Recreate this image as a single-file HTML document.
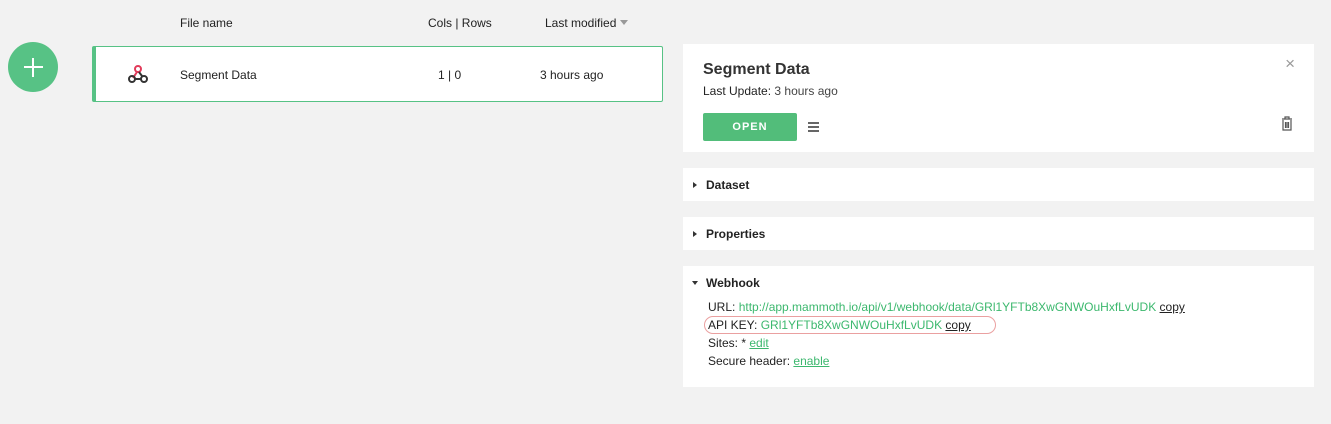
<!DOCTYPE html>
<html><head><style>
body{margin:0;width:1331px;height:424px;background:#f2f2f2;font-family:"Liberation Sans",sans-serif;color:#222;font-size:12px;position:relative;overflow:hidden}
.a{position:absolute;white-space:nowrap}
.box{position:absolute;left:683px;width:631px;background:#fff}
.g{color:#3cb86e}
.u{text-decoration:underline}
.tri{display:inline-block;width:0;height:0;border-left:4px solid #333;border-top:3.5px solid transparent;border-bottom:3.5px solid transparent;margin-right:9px;vertical-align:1px}
.trid{display:inline-block;width:0;height:0;border-top:4px solid #333;border-left:3.5px solid transparent;border-right:3.5px solid transparent;margin-right:8px;vertical-align:2px}
</style></head><body>
<div class="a" style="left:180px;top:16px">File name</div>
<div class="a" style="left:428px;top:16px">Cols | Rows</div>
<div class="a" style="left:545px;top:16px">Last modified <span style="display:inline-block;border-top:5px solid #999;border-left:4.5px solid transparent;border-right:4.5px solid transparent;vertical-align:2px"></span></div>
<div class="a" style="left:8px;top:42px;width:50px;height:50px;border-radius:50%;background:#57c285"></div>
<div class="a" style="left:24px;top:66px;width:19px;height:2px;background:#fff"></div>
<div class="a" style="left:32px;top:58px;width:2px;height:19px;background:#fff"></div>
<div class="a" style="left:92px;top:46px;width:566px;height:54px;background:#fff;border:1px solid #57c285;border-left:4px solid #57c285;border-radius:2px"></div>
<svg class="a" style="left:127px;top:64px" width="22" height="20" viewBox="0 0 22 20"><circle cx="11" cy="5" r="3" fill="none" stroke="#e23b5a" stroke-width="2"/><path d="M10 8 L6 14" stroke="#e23b5a" stroke-width="2"/><circle cx="5" cy="15" r="3" fill="none" stroke="#333" stroke-width="2"/><circle cx="17" cy="15" r="3" fill="none" stroke="#333" stroke-width="2"/><path d="M8 15 H14 M12 8 L15 12" stroke="#333" stroke-width="2"/></svg>
<div class="a" style="left:180px;top:68px">Segment Data</div>
<div class="a" style="left:438px;top:68px">1 | 0</div>
<div class="a" style="left:540px;top:68px">3 hours ago</div>

<div class="box" style="top:44px;height:108px">
<div class="a" style="left:20px;top:17px;font-size:16px;font-weight:bold;color:#333">Segment Data</div>
<div class="a" style="left:20px;top:40px">Last Update: <span style="color:#444">3 hours ago</span></div>
<div class="a" style="right:19px;top:10px;font-size:17px;color:#999">×</div>
<div class="a" style="left:20px;top:69px;width:94px;height:28px;background:#52bd7a;border-radius:2px;color:#fff;font-weight:bold;text-align:center;line-height:28px;letter-spacing:1px;font-size:11px">OPEN</div>
<div class="a" style="left:125px;top:78px;width:11px;height:2px;background:#666;box-shadow:0 4px 0 #666,0 8px 0 #666"></div>
<svg class="a" style="left:598px;top:72px" width="12" height="15" viewBox="0 0 12 15"><path d="M1 3H11M4 3V1H8V3M2 4V14H10V4M4.5 6V12M6 6V12M7.5 6V12" fill="none" stroke="#555" stroke-width="1.2"/></svg>
</div>
<div class="box" style="top:168px;height:33px"><div class="a" style="left:10px;top:10px;font-weight:bold"><span class="tri"></span>Dataset</div></div>
<div class="box" style="top:217px;height:33px"><div class="a" style="left:10px;top:10px;font-weight:bold"><span class="tri"></span>Properties</div></div>
<div class="box" style="top:266px;height:121px">
<div class="a" style="left:9px;top:10px;font-weight:bold"><span class="trid"></span>Webhook</div>
<div class="a" style="left:25px;top:34px">URL: <span class="g">http://app.mammoth.io/api/v1/webhook/data/GRl1YFTb8XwGNWOuHxfLvUDK</span> <span class="u">copy</span></div>
<div class="a" style="left:21px;top:50px;width:290px;height:16px;border:1.5px solid #eaa0a0;border-radius:9px"></div>
<div class="a" style="left:25px;top:52px">API KEY: <span class="g">GRl1YFTb8XwGNWOuHxfLvUDK</span> <span class="u">copy</span></div>
<div class="a" style="left:25px;top:70px">Sites: * <span class="g u">edit</span></div>
<div class="a" style="left:25px;top:88px">Secure header: <span class="g u">enable</span></div>
</div>
</body></html>
